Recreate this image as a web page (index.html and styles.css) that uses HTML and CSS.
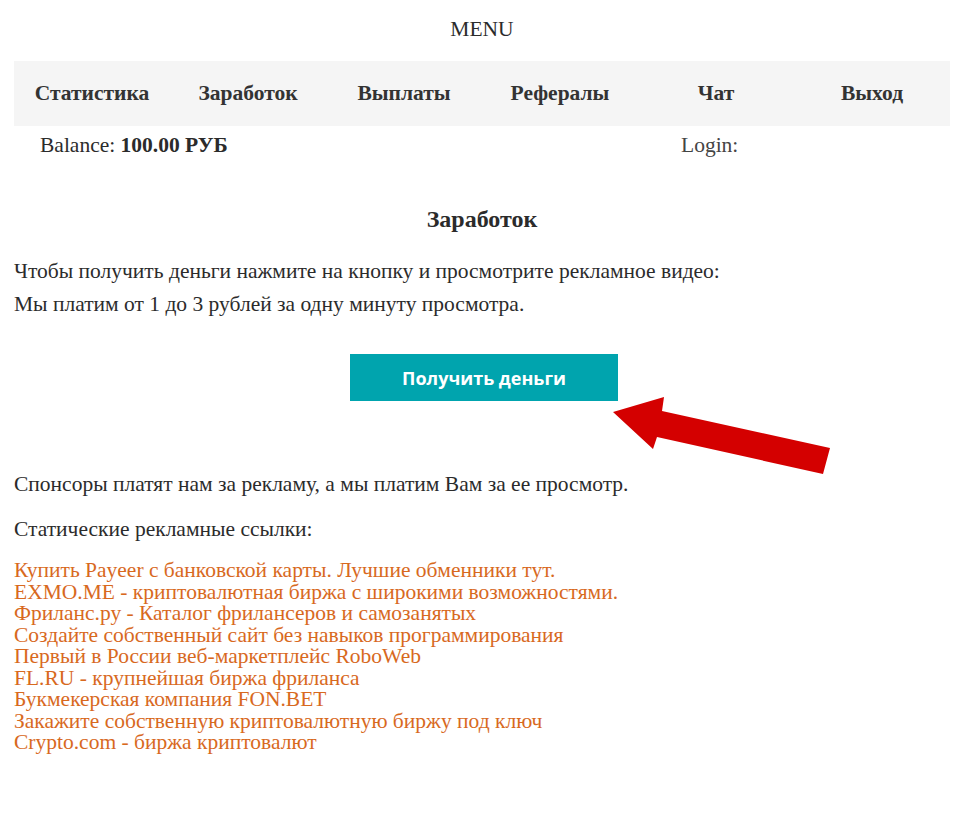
FILE: index.html
```html
<!DOCTYPE html>
<html lang="ru">
<head>
    <meta charset="UTF-8">
    <meta name="viewport" content="width=device-width, initial-scale=1.0">
    <title>Заработок</title>
    <link rel="stylesheet" href="styles.css">
</head>
<body>
    <div class="page">
        <!-- Top menu -->
        <div class="menu-title">MENU</div>
        <nav class="menu">
            <a href="#">Статистика</a>
            <a href="#">Заработок</a>
            <a href="#">Выплаты</a>
            <a href="#">Рефералы</a>
            <a href="#">Чат</a>
            <a href="#">Выход</a>
        </nav>
        <div class="user-bar">
            <div class="balance">Balance: <b>100.00 РУБ</b></div>
            <div class="login">Login:</div>
        </div>

        <!-- Earn section -->
        <h2 class="section-title">Заработок</h2>
        <p class="text">Чтобы получить деньги нажмите на кнопку и просмотрите рекламное видео:</p>
        <p class="text">Мы платим от 1 до 3 рублей за одну минуту просмотра.</p>

        <div class="get-money">
            <button class="get-money-btn">Получить деньги</button>
            <svg class="arrow" width="230" height="90" viewBox="0 0 230 90">
                <polygon points="3,27 54,12 52,26 220,63 213,89 47,52 43,64" fill="#d40000"/>
            </svg>
        </div>

        <p class="text sponsors">Спонсоры платят нам за рекламу, а мы платим Вам за ее просмотр.</p>
        <p class="text static">Статические рекламные ссылки:</p>

        <div class="ads">
            <a href="#">Купить Payeer с банковской карты. Лучшие обменники тут.</a>
            <a href="#">EXMO.ME - криптовалютная биржа с широкими возможностями.</a>
            <a href="#">Фриланс.ру - Каталог фрилансеров и самозанятых</a>
            <a href="#">Создайте собственный сайт без навыков программирования</a>
            <a href="#">Первый в России веб-маркетплейс RoboWeb</a>
            <a href="#">FL.RU - крупнейшая биржа фриланса</a>
            <a href="#">Букмекерская компания FON.BET</a>
            <a href="#">Закажите собственную криптовалютную биржу под ключ</a>
            <a href="#">Crypto.com - биржа криптовалют</a>
        </div>
    </div>
</body>
</html>
```

FILE: styles.css
```css
/* General */
* {
    margin: 0;
    padding: 0;
    box-sizing: border-box;
}

body {
    font-family: 'Liberation Serif', 'Times New Roman', serif;
    font-size: 21.5px;
    color: #2b2b2b;
    background: #fff;
}

.page {
    padding: 0 24px 0 14px;
}

/* Menu */
.menu-title {
    height: 61px;
    line-height: 58px;
    text-align: center;
}

.menu {
    display: grid;
    grid-template-columns: repeat(6, 1fr);
    align-items: center;
    height: 65px;
    background: #f5f5f5;
}

.menu a {
    text-align: center;
    font-weight: bold;
    color: #333;
    text-decoration: none;
}

.user-bar {
    display: grid;
    grid-template-columns: 667px auto;
    height: 38px;
    align-items: center;
}

.balance {
    padding-left: 26px;
}

.login {
    color: #444;
}

/* Earn section */
.section-title {
    margin-top: 40px;
    text-align: center;
    font-size: 24px;
    line-height: 30px;
}

.text {
    line-height: 33px;
}

.section-title + .text {
    margin-top: 21px;
}

.get-money {
    position: relative;
    display: flex;
    justify-content: center;
    margin-top: 33px;
    padding-left: 4px;
}

.get-money-btn {
    width: 268px;
    height: 47px;
    border: none;
    background: #00a4ae;
    color: #fff;
    font-family: 'Open Sans', sans-serif;
    font-weight: bold;
    font-size: 18px;
    cursor: pointer;
}

.arrow {
    position: absolute;
    left: 596px;
    top: 31px;
}

.sponsors {
    margin-top: 67px;
}

.static {
    margin-top: 12px;
}

/* Sponsor links */
.ads {
    margin-top: 14px;
    display: flex;
    flex-direction: column;
}

.ads a {
    color: #d8691e;
    text-decoration: none;
    line-height: 21.5px;
}
```
